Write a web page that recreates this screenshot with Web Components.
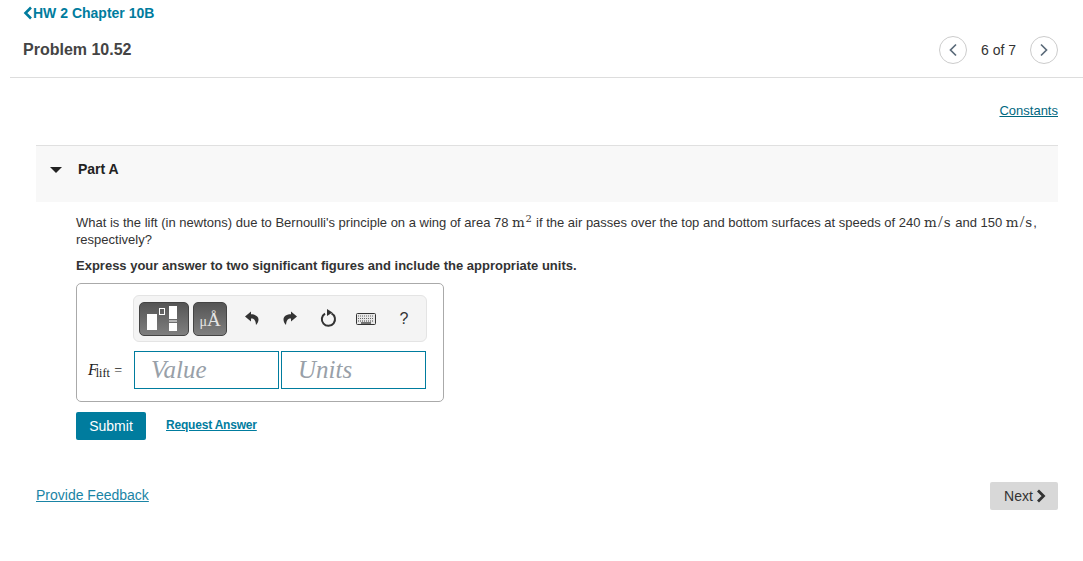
<!DOCTYPE html>
<html>
<head>
<meta charset="utf-8">
<title>Problem 10.52</title>
<style>
  html, body { margin: 0; padding: 0; background: #fff; }
  body { font-family: "Liberation Sans", Arial, sans-serif; color: #333; font-size: 14px; }
</style>
</head>
<body>
<hw-page></hw-page>

<script>
const ICONS = {
  left: '<svg width="10" height="14" viewBox="0 0 10 14"><path d="M8 1.500 2.500 7 8 12.500" fill="none" stroke="currentColor" stroke-width="2.600"/></svg>',
  right: '<svg width="10" height="14" viewBox="0 0 10 14"><path d="M2 1.500 7.500 7 2 12.500" fill="none" stroke="currentColor" stroke-width="2.800"/></svg>',
  thinLeft: '<svg width="10" height="14" viewBox="0 0 10 14"><path d="M8 1.500 2.500 7 8 12.500" fill="none" stroke="#5b6b7a" stroke-width="1.700"/></svg>',
  thinRight: '<svg width="10" height="14" viewBox="0 0 10 14"><path d="M2 1.500 7.500 7 2 12.500" fill="none" stroke="#5b6b7a" stroke-width="1.700"/></svg>',
  undo: '<svg width="14" height="15" viewBox="0 0 14 15"><path d="M6 .5 0 5.500l6 5V7.500c2.500-.2 4.500.8 5 6.500 1.500-1.500 2.500-3.500 2.500-5.500C13.500 5 10 3.300 6 3.300z" fill="#333"/></svg>',
  redo: '<svg width="14" height="15" viewBox="0 0 14 15"><path d="M8 .5l6 5-6 5V7.500c-2.500-.2-4.500.8-5 6.500C1.500 12.500.5 10.500.5 8.500.5 5 4 3.300 8 3.300z" fill="#333"/></svg>',
  reset: '<svg width="17" height="19" viewBox="0 0 17 19"><path d="M5 4.600a6.600 6.600 0 1 0 6.500-.2" fill="none" stroke="#333" stroke-width="2"/><path d="M7 0l5.500 3.600L7 7z" fill="#333"/></svg>',
  keyboard: '<svg width="20" height="12" viewBox="0 0 20 12"><rect x=".5" y=".5" width="19" height="11" rx="1" fill="#e8e8e8" stroke="#333"/><path d="M2 3h16M2 5.500h16" stroke="#666" stroke-width="1" stroke-dasharray="1 1"/><path d="M2 8h16" stroke="#444" stroke-width="1" stroke-dasharray="1 1"/><path d="M5 10h10" stroke="#333" stroke-width="1.300"/></svg>',
  templates: '<svg width="50" height="34" viewBox="0 0 50 34"><rect x="8" y="12" width="10" height="16" fill="#fff"/><rect x="20.500" y="6.500" width="5" height="6" fill="none" stroke="#fff" stroke-width="1"/><rect x="30" y="4" width="8" height="13" fill="#fff"/><rect x="30" y="18.500" width="8" height="1" fill="#fff"/><rect x="30" y="21" width="8" height="8" fill="#fff"/></svg>'
};

class HwHeader extends HTMLElement {
  constructor() {
    super();
    this.attachShadow({ mode: "open" }).innerHTML = `
      <style>
        :host { display: block; margin-left: 10px; border-bottom: 1px solid #ddd; height: 77px; padding: 0 25px 0 13px; }
        a { color: #007c9e; text-decoration: none; font-weight: bold; font-size: 14px; display: flex; align-items: center; height: 26px; }
        .row { display: flex; align-items: center; justify-content: space-between; height: 46px; padding-top: 1px; }
        h1 { margin: 0; font-size: 16px; font-weight: bold; color: #444; }
        .pager { display: flex; align-items: center; gap: 14px; font-size: 14px; color: #333; }
        .pager span { display: flex; align-items: center; justify-content: center; width: 28px; height: 28px; border: 1px solid #ccc; border-radius: 50%; box-sizing: border-box; }
      </style>
      <a>${ICONS.left}HW 2 Chapter 10B</a>
      <div class="row">
        <h1><slot name="title"></slot></h1>
        <div class="pager"><span>${ICONS.thinLeft}</span><div><slot name="count"></slot></div><span>${ICONS.thinRight}</span></div>
      </div>`;
  }
}
customElements.define("hw-header", HwHeader);

class HwToolbar extends HTMLElement {
  constructor() {
    super();
    this.attachShadow({ mode: "open" }).innerHTML = `
      <style>
        :host { display: flex; align-items: center; margin-left: 56px; width: 294px; height: 47px; box-sizing: border-box; background: #f4f4f4; border: 1px solid #e4e4e4; border-radius: 6px; padding-left: 5px; }
        .btn { display: flex; align-items: center; justify-content: center; height: 34px; border: 1px solid #444; border-radius: 5px; box-sizing: border-box; background: linear-gradient(#555, #7f7f7f); color: #fff; }
        .tpl { width: 50px; margin-right: 4px; }
        .tpl svg { margin: -1px; }
        .unit { width: 34px; font: 19px "Liberation Serif", serif; color: #e4e4e4; padding-top: 3px; align-items: baseline; line-height: 27px; }
        .unit small { font-size: 14px; }
        .tool { display: flex; align-items: center; justify-content: center; width: 38px; }
        .tools { display: flex; margin-left: 6px; }
        .q { font-size: 16px; color: #333; }
      </style>
      <div class="btn tpl">${ICONS.templates}</div>
      <div class="btn unit"><small>μ</small>Å</div>
      <div class="tools">
        <div class="tool">${ICONS.undo}</div>
        <div class="tool">${ICONS.redo}</div>
        <div class="tool">${ICONS.reset}</div>
        <div class="tool">${ICONS.keyboard}</div>
        <div class="tool q">?</div>
      </div>`;
  }
}
customElements.define("hw-toolbar", HwToolbar);

class HwAnswer extends HTMLElement {
  constructor() {
    super();
    this.attachShadow({ mode: "open" }).innerHTML = `
      <style>
        :host { display: block; width: 368px; height: 119px; box-sizing: border-box; border: 1px solid #aaa; border-radius: 5px; padding-top: 11px; }
        .row { display: flex; align-items: center; margin-top: 9px; }
        .label { width: 57px; box-sizing: border-box; padding-left: 11px; font: 14px "Liberation Serif", serif; color: #222; white-space: nowrap; }
        .label i { font-size: 16px; }
        .label sub { font-size: 12px; margin-left: -2px; line-height: 0; vertical-align: -2px; }
        .label b { font-weight: normal; margin-left: 1px; }
        .field { width: 145px; height: 38px; box-sizing: border-box; border: 1px solid #007c9e; display: flex; align-items: center; padding-left: 16px; font: italic 25px "Liberation Serif", serif; color: #98a0a8; }
        .field + .field { margin-left: 2px; }
      </style>
      <hw-toolbar></hw-toolbar>
      <div class="row">
        <div class="label"><i>F</i><sub>lift</sub><b> =</b></div>
        <div class="field">Value</div>
        <div class="field">Units</div>
      </div>`;
  }
}
customElements.define("hw-answer", HwAnswer);

class HwPart extends HTMLElement {
  constructor() {
    super();
    this.attachShadow({ mode: "open" }).innerHTML = `
      <style>
        :host { display: block; margin: 0 25px 0 36px; }
        .head { display: flex; align-items: flex-start; background: #f8f8f8; border-top: 1px solid #e0e0e0; padding-top: 15px; box-sizing: border-box; height: 57px; font-weight: bold; color: #222; font-size: 14px; }
        .arrow { width: 0; height: 0; border: 6px solid transparent; border-top: 6px solid #222; border-bottom: 0; margin: 6px 16px 0 14px; }
        .body { padding: 12px 0 0 40px; }
        .q { line-height: 17px; font-size: 13px; color: #333; }
        .hint { font-weight: bold; font-size: 13px; margin: 9px 0 8px; line-height: 18px; color: #333; }
        .actions { display: flex; align-items: flex-start; margin-top: 10px; }
        .submit { width: 70px; height: 28px; background: #007c9e; color: #fff; display: flex; align-items: center; justify-content: center; font-size: 14px; border-radius: 2px; }
        .req { color: #007c9e; font-weight: bold; font-size: 12px; letter-spacing: -.2px; text-decoration: underline; margin: 6px 0 0 20px; }
      </style>
      <div class="head"><span class="arrow"></span><span>Part A</span></div>
      <div class="body">
        <div class="q"><slot></slot></div>
        <div class="hint">Express your answer to two significant figures and include the appropriate units.</div>
        <hw-answer></hw-answer>
        <div class="actions"><div class="submit">Submit</div><a class="req">Request Answer</a></div>
      </div>`;
  }
}
customElements.define("hw-part", HwPart);

class HwPage extends HTMLElement {
  constructor() {
    super();
    this.attachShadow({ mode: "open" }).innerHTML = `
      <style>
        :host { display: block; width: 1083px; height: 561px; overflow: hidden; font-family: "Liberation Sans", Arial, sans-serif; }
        .constants { text-align: right; padding: 25px 25px 0 0; height: 42px; font-size: 13px; }
        .constants a { color: #00677f; text-decoration: underline; }
        .m { font: 13.5px/0 "DejaVu Serif", serif; letter-spacing: .6px; color: #333; }
        .u { letter-spacing: 1px; }
        .u b { font: 17px/0 "Liberation Serif", serif; }
        sup { font-size: 10px; line-height: 0; vertical-align: 5px; }
        .foot { display: flex; align-items: flex-start; justify-content: space-between; margin: 42px 25px 0 36px; }
        .foot a { color: #1a84a5; text-decoration: underline; font-size: 14px; margin-top: 5px; }
        .next { display: flex; align-items: center; justify-content: center; gap: 3px; padding-left: 2px; box-sizing: border-box; width: 68px; height: 28px; background: #d8d8d8; border-radius: 2px; font-size: 14px; color: #333; }
      </style>
      <hw-header>
        <span slot="title">Problem 10.52</span>
        <span slot="count">6 of 7</span>
      </hw-header>
      <div class="constants"><a>Constants</a></div>
      <hw-part>What is the lift (in newtons) due to Bernoulli's principle on a wing of area 78 <span class="m">m<sup>2</sup></span> if the air passes over the top and bottom surfaces at speeds of 240 <span class="m u">m<b>/</b>s</span> and 150 <span class="m u">m<b>/</b>s</span>, respectively?</hw-part>
      <div class="foot"><a>Provide Feedback</a><div class="next">Next${ICONS.right}</div></div>`;
  }
}
customElements.define("hw-page", HwPage);
</script>
</body>
</html>
